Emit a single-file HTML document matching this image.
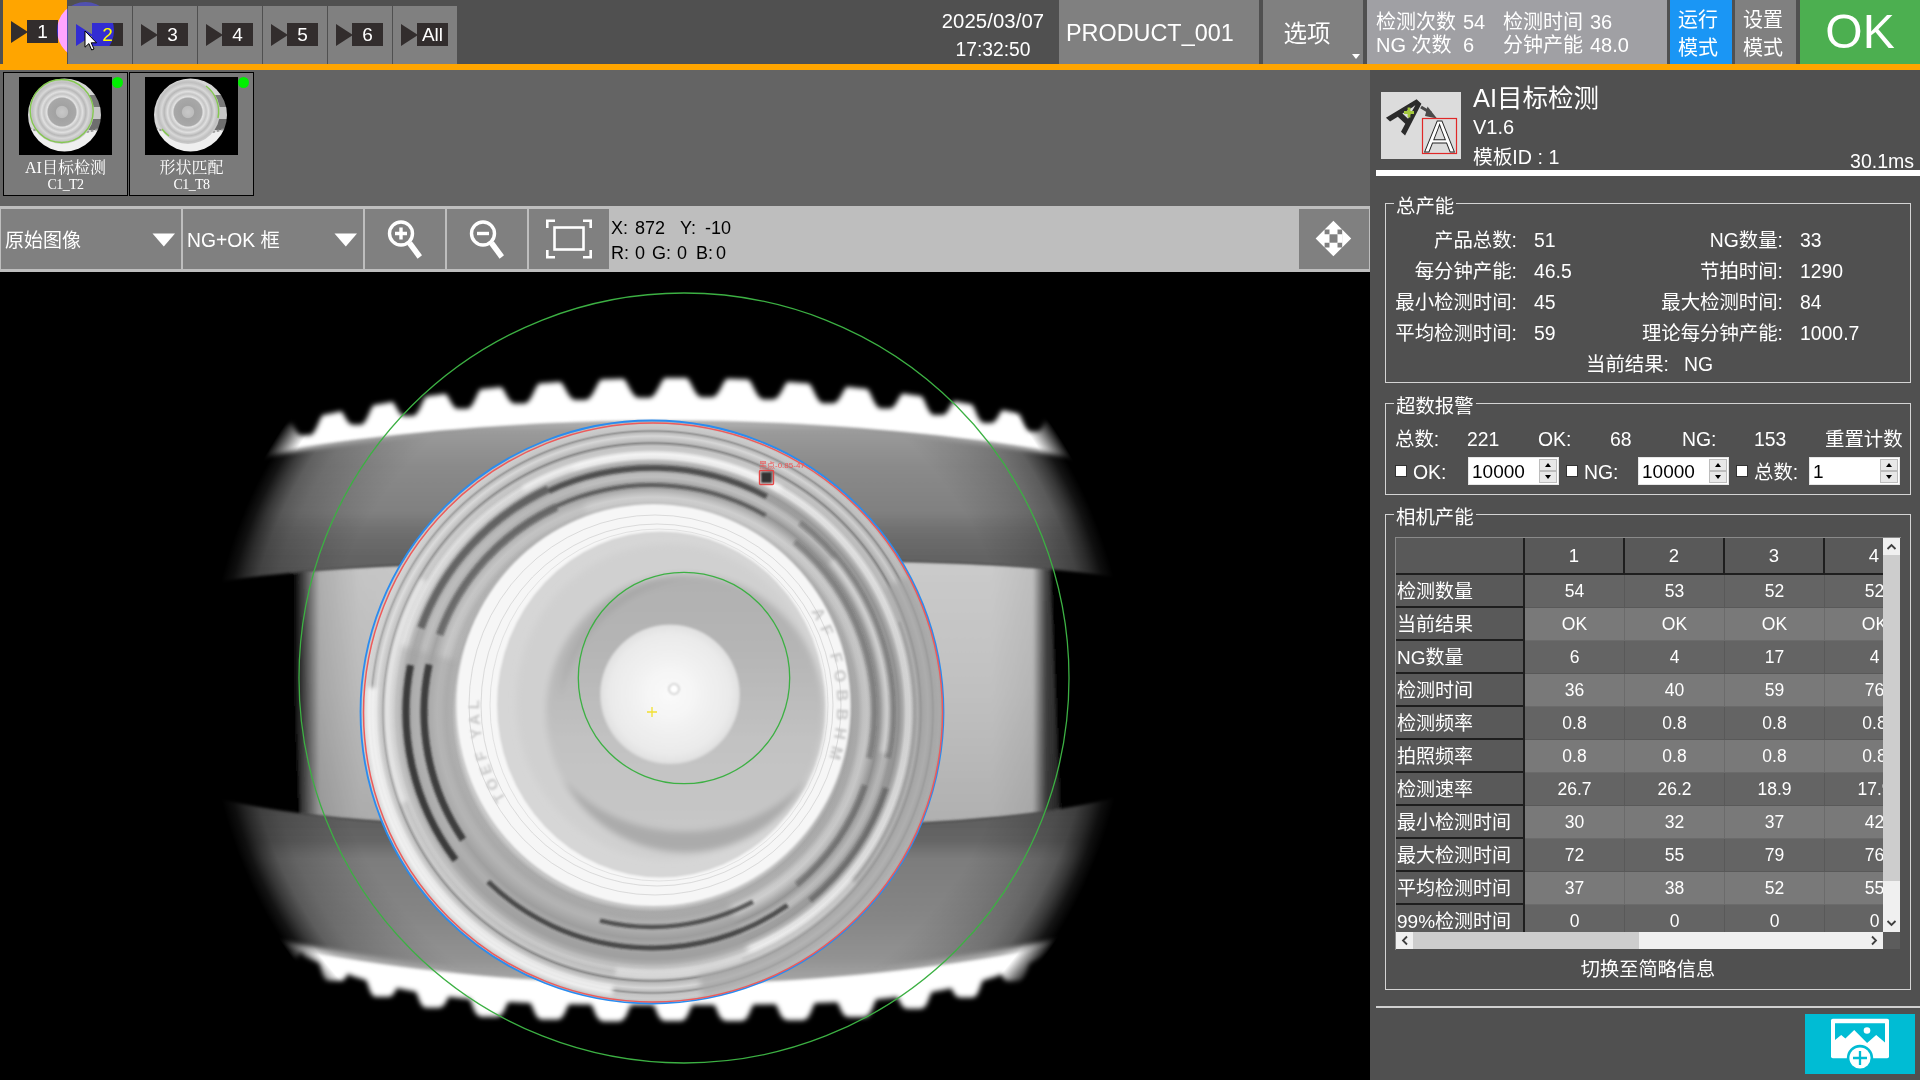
<!DOCTYPE html>
<html lang="zh-CN">
<head>
<meta charset="utf-8">
<title>AI目标检测</title>
<style>
*{box-sizing:border-box;margin:0;padding:0}
html,body{width:1920px;height:1080px;overflow:hidden;background:#505050}
body{position:relative;font-family:"Liberation Sans","Noto Sans CJK SC",sans-serif;color:#fff;font-size:19px}
.abs{position:absolute}
.t{position:absolute;white-space:nowrap;line-height:1}
/* ---------- top bar ---------- */
#topbar{position:absolute;left:0;top:0;width:1920px;height:64px;background:#505050}
#oline{position:absolute;left:0;top:64px;width:1920px;height:6px;background:#ffa500}
.tab{position:absolute;top:6px;height:58px;width:64px;background:#808080}
.tab.sel{top:0;height:64px;background:#ffa500}
.cam{position:absolute;left:8px;top:17px;width:48px;height:24px}
.tab.sel .cam{top:20px}
.cam i{position:absolute;left:0;top:1px;width:0;height:0;border-left:17px solid #322d2d;border-top:11px solid transparent;border-bottom:11px solid transparent}
.cam b{position:absolute;left:16px;top:0;width:31px;height:23px;background:#322d2d;color:#fff;font-weight:normal;font-size:19px;line-height:24px;text-align:center}
.box{position:absolute;top:0;height:64px}
/* ---------- left panel ---------- */
#left{position:absolute;left:0;top:70px;width:1370px;height:1010px;background:#646464}
.thumb{position:absolute;top:2px;width:125px;height:124px;background:#7a7a7a;border:1px solid #000}
.thumb svg{position:absolute;left:15px;top:4px}
.thumb .dot{position:absolute;left:108px;top:4px;width:11px;height:11px;border-radius:50%;background:#00f000}
.thumb .n1{position:absolute;left:0;width:123px;top:86px;text-align:center;font-family:"Liberation Serif","Noto Serif CJK SC",serif;font-size:16px;line-height:18px}
.thumb .n2{position:absolute;left:0;width:123px;top:105px;text-align:center;font-family:"Liberation Serif","Noto Serif CJK SC",serif;font-size:14px;letter-spacing:-0.6px;line-height:14px}
#toolbar{position:absolute;left:0;top:136px;width:1370px;height:66px;background:#bebebe}
.tb{position:absolute;top:3px;height:60px;background:#808080}
#view{position:absolute;left:0;top:202px;width:1370px;height:808px;background:#000;overflow:hidden}
/* ---------- right panel ---------- */
#right{position:absolute;left:1370px;top:70px;width:550px;height:1010px;background:#505050}
.grp{position:absolute;border:1px solid #d4d4d4}
.leg{position:absolute;background:#505050;padding:0 2px;line-height:20px;font-size:19.4px;white-space:nowrap;margin-top:1.5px}
.lab{position:absolute;text-align:right;white-space:nowrap;line-height:22px;height:22px;font-size:19.4px}
.val{position:absolute;white-space:nowrap;line-height:22px;height:22px;font-size:19.4px}
.chk{position:absolute;width:12px;height:12px;background:#fff;border:1px solid #333}
.spin{position:absolute;height:28px;width:91px;background:#fff;border:1px solid #e6e6e6;color:#000;font-size:19px;line-height:27px;padding-left:3px}
.spin u{position:absolute;right:1px;width:18px;height:12px;background:#e8e8e8;border:1px solid #bdbdbd;text-decoration:none}
.spin u:before{content:"";position:absolute;left:5px;top:3px;border-left:3.5px solid transparent;border-right:3.5px solid transparent}
.spin u.up{top:1px}.spin u.up:before{border-bottom:4px solid #000}
.spin u.dn{top:13px}.spin u.dn:before{border-top:4px solid #000}
</style>
</head>
<body>
<div id="topbar">
  <div class="tab sel" style="left:3px"><div class="cam"><i></i><b>1</b></div></div>
  <div class="tab" style="left:68px"><div class="cam"><i></i><b>2</b></div></div>
  <div class="tab" style="left:133px"><div class="cam"><i></i><b>3</b></div></div>
  <div class="tab" style="left:198px"><div class="cam"><i></i><b>4</b></div></div>
  <div class="tab" style="left:263px"><div class="cam"><i></i><b>5</b></div></div>
  <div class="tab" style="left:328px"><div class="cam"><i></i><b>6</b></div></div>
  <div class="tab" style="left:393px"><div class="cam"><i></i><b>All</b></div></div>
  <div class="t" style="left:893px;width:200px;top:11px;text-align:center;font-size:20.3px;letter-spacing:0.1px">2025/03/07</div>
  <div class="t" style="left:893px;width:200px;top:40px;text-align:center;font-size:19.3px">17:32:50</div>
  <div class="box" style="left:1059px;width:200px;background:#808080"><div class="t" style="left:7px;top:21.5px;font-size:23.4px">PRODUCT_001</div></div>
  <div class="box" style="left:1263px;width:100px;background:#808080"><div class="t" style="left:0;width:88px;top:23px;text-align:center;font-size:23.5px">选项</div>
    <div class="abs" style="left:89px;top:54px;width:0;height:0;border-left:4.5px solid transparent;border-right:4.5px solid transparent;border-top:5px solid #fff"></div></div>
  <div class="box" style="left:1367px;width:300px;background:#a0a0a4;font-size:20px">
    <div class="t" style="left:9px;top:12px">检测次数</div><div class="t" style="left:96px;top:12px">54</div>
    <div class="t" style="left:9px;top:35px">NG 次数</div><div class="t" style="left:96px;top:35px">6</div>
    <div class="t" style="left:136px;top:12px">检测时间</div><div class="t" style="left:223px;top:12px">36</div>
    <div class="t" style="left:136px;top:35px">分钟产能</div><div class="t" style="left:223px;top:35px">48.0</div>
  </div>
  <div class="box" style="left:1670px;width:62px;background:#1a96f5;font-size:20px"><div class="t" style="left:8px;top:10px">运行</div><div class="t" style="left:8px;top:38px">模式</div></div>
  <div class="box" style="left:1735px;width:61px;background:#808080;font-size:20px"><div class="t" style="left:8px;top:10px">设置</div><div class="t" style="left:8px;top:38px">模式</div></div>
  <div class="box" style="left:1800px;width:120px;background:#4caf50"><div class="t" style="left:0;width:120px;top:8px;text-align:center;font-size:48px">OK</div></div>
</div>
<div id="oline"></div>

<div id="left">
  <div class="thumb" style="left:3px"><svg width="93" height="78" viewBox="0 0 93 78"><defs><radialGradient id="tg1" gradientUnits="userSpaceOnUse" cx="43" cy="35" r="33"><stop offset="0" stop-color="#c8c8c8"/><stop offset="0.17" stop-color="#bdbdbd"/><stop offset="0.2" stop-color="#a2a2a2"/><stop offset="0.42" stop-color="#a8a8a8"/><stop offset="0.46" stop-color="#e4e4e4"/><stop offset="0.55" stop-color="#c4c4c4"/><stop offset="0.62" stop-color="#e0e0e0"/><stop offset="0.72" stop-color="#b8b8b8"/><stop offset="0.8" stop-color="#d8d8d8"/><stop offset="0.9" stop-color="#c0c0c0"/><stop offset="1" stop-color="#d0d0d0"/></radialGradient><clipPath id="tc1"><circle cx="45.5" cy="38" r="36.5"/></clipPath><filter id="tb1"><feGaussianBlur stdDeviation="0.7"/></filter></defs><rect width="93" height="78" fill="#000"/><g clip-path="url(#tc1)" filter="url(#tb1)"><rect x="0" y="0" width="93" height="78" fill="#d6d6d6"/><rect x="60" y="18" width="33" height="12" fill="#7a7a7a"/><rect x="60" y="42" width="33" height="11" fill="#6e6e6e"/><rect x="60" y="30" width="33" height="12" fill="#c8c8c8"/><path d="M6 50Q45 66 86 50L86 80L6 80Z" fill="#efefef"/><path d="M10 51Q45 64 82 51" stroke="#9a9a9a" stroke-width="2" stroke-dasharray="2.500 2" fill="none"/><circle cx="43" cy="35" r="32" fill="url(#tg1)"/></g><circle cx="42.7" cy="34" r="31.5" fill="none" stroke="#84c850" stroke-width="1.4"/></svg><div class="dot"></div><div class="n1">AI目标检测</div><div class="n2">C1_T2</div></div>
  <div class="thumb" style="left:129px"><svg width="93" height="78" viewBox="0 0 93 78"><defs><radialGradient id="tg2" gradientUnits="userSpaceOnUse" cx="43" cy="35" r="33"><stop offset="0" stop-color="#c8c8c8"/><stop offset="0.17" stop-color="#bdbdbd"/><stop offset="0.2" stop-color="#a2a2a2"/><stop offset="0.42" stop-color="#a8a8a8"/><stop offset="0.46" stop-color="#e4e4e4"/><stop offset="0.55" stop-color="#c4c4c4"/><stop offset="0.62" stop-color="#e0e0e0"/><stop offset="0.72" stop-color="#b8b8b8"/><stop offset="0.8" stop-color="#d8d8d8"/><stop offset="0.9" stop-color="#c0c0c0"/><stop offset="1" stop-color="#d0d0d0"/></radialGradient><clipPath id="tc2"><circle cx="45.5" cy="38" r="36.5"/></clipPath><filter id="tb2"><feGaussianBlur stdDeviation="0.7"/></filter></defs><rect width="93" height="78" fill="#000"/><g clip-path="url(#tc2)" filter="url(#tb2)"><rect x="0" y="0" width="93" height="78" fill="#d6d6d6"/><rect x="60" y="18" width="33" height="12" fill="#7a7a7a"/><rect x="60" y="42" width="33" height="11" fill="#6e6e6e"/><rect x="60" y="30" width="33" height="12" fill="#c8c8c8"/><path d="M6 50Q45 66 86 50L86 80L6 80Z" fill="#efefef"/><path d="M10 51Q45 64 82 51" stroke="#9a9a9a" stroke-width="2" stroke-dasharray="2.500 2" fill="none"/><circle cx="43" cy="35" r="32" fill="url(#tg2)"/></g><path d="M61 9A32 32 0 0 1 73 41" fill="none" stroke="#84c850" stroke-width="1.4"/><path d="M17 52A32 32 0 0 0 24 59" fill="none" stroke="#84c850" stroke-width="1.4"/></svg><div class="dot"></div><div class="n1">形状匹配</div><div class="n2">C1_T8</div></div>
  <div id="toolbar">
    <div class="tb" style="left:1px;width:180px"><div class="t" style="left:4px;top:22px;font-size:19px">原始图像</div>
      <svg class="abs" style="left:151px;top:24px" width="24" height="14"><path d="M0.5 0.5H23L11.8 13.5Z" fill="#fff"/></svg></div>
    <div class="tb" style="left:183px;width:180px"><div class="t" style="left:4px;top:22px;font-size:19.3px">NG+OK 框</div>
      <svg class="abs" style="left:151px;top:24px" width="24" height="14"><path d="M0.5 0.5H23L11.8 13.5Z" fill="#fff"/></svg></div>
    <div class="tb" style="left:365px;width:80px"><svg class="abs" style="left:0;top:0" width="80" height="60" fill="none" stroke="#fff">
      <circle cx="36" cy="24.5" r="11.5" stroke-width="3.4"/><path d="M44.500 34L54.800 48" stroke-width="5.5"/><path d="M30 24.5H42M36 18.5V30.5" stroke-width="3.4"/></svg></div>
    <div class="tb" style="left:447px;width:80px"><svg class="abs" style="left:0;top:0" width="80" height="60" fill="none" stroke="#fff">
      <circle cx="36" cy="24.5" r="11.5" stroke-width="3.4"/><path d="M44.500 34L54.800 48" stroke-width="5.5"/><path d="M30 24.5H42" stroke-width="3.4"/></svg></div>
    <div class="tb" style="left:529px;width:80px"><svg class="abs" style="left:0;top:0" width="80" height="60" fill="none" stroke="#fff" stroke-width="2.6">
      <rect x="25.5" y="18.5" width="29" height="22"/><path d="M18.3 19V11.7H26M54 11.7H61.700V19M61.7 41V48.3H54M26 48.3H18.3V41"/></svg></div>
    <div class="t" style="left:611px;top:13px;font-size:18px;color:#000">X:</div><div class="t" style="left:635px;top:13px;font-size:18px;color:#000">872</div><div class="t" style="left:680px;top:13px;font-size:18px;color:#000">Y:</div><div class="t" style="left:705px;top:13px;font-size:18px;color:#000">-10</div>
    <div class="t" style="left:611px;top:38px;font-size:18px;color:#000">R:</div><div class="t" style="left:635px;top:38px;font-size:18px;color:#000">0</div><div class="t" style="left:652px;top:38px;font-size:18px;color:#000">G:</div><div class="t" style="left:677px;top:38px;font-size:18px;color:#000">0</div><div class="t" style="left:696px;top:38px;font-size:18px;color:#000">B:</div><div class="t" style="left:716px;top:38px;font-size:18px;color:#000">0</div>
    <div class="tb" style="left:1299px;width:70px"><svg class="abs" style="left:0;top:0" width="70" height="60"><path fill="#fff" d="M34.400 11.700L43.200 20.500H25.600ZM34.400 47.300L43.200 38.500H25.600ZM16.600 29.500L25.600 20.500V38.500ZM52.200 29.500L43.200 20.500V38.500ZM30.500 20.400H38.500V38.600H30.500ZM25.500 25.300H43.300V33.700H25.500Z"/><rect x="30.500" y="25.300" width="8" height="8.400" fill="#808080"/></svg></div>
  </div>
  <div id="view"><svg width="1370" height="808" viewBox="0 272 1370 808" style="position:absolute;left:0;top:0">
<defs>
<radialGradient id="vg" gradientUnits="userSpaceOnUse" cx="668" cy="690" r="480.0"><stop offset="0.7188" stop-color="#ffffff"/><stop offset="0.7875" stop-color="#e6e6e6"/><stop offset="0.8500" stop-color="#cccccc"/><stop offset="0.8854" stop-color="#adadad"/><stop offset="0.9125" stop-color="#6b6b6b"/><stop offset="0.9354" stop-color="#262626"/><stop offset="0.9583" stop-color="#000000"/></radialGradient>
<radialGradient id="vgw" gradientUnits="userSpaceOnUse" cx="668" cy="686" r="480.0"><stop offset="0.9167" stop-color="#ffffff"/><stop offset="0.9417" stop-color="#808080"/><stop offset="0.9667" stop-color="#000000"/></radialGradient>
<mask id="vm" maskUnits="userSpaceOnUse" x="0" y="272" width="1370" height="808"><rect x="0" y="272" width="1370" height="808" fill="url(#vg)"/></mask>
<mask id="vmw" maskUnits="userSpaceOnUse" x="0" y="272" width="1370" height="808"><rect x="0" y="272" width="1370" height="808" fill="url(#vgw)"/></mask>
<filter id="b1" filterUnits="userSpaceOnUse" x="0" y="272" width="1370" height="808"><feGaussianBlur stdDeviation="1.6"/></filter>
<filter id="b2s" filterUnits="userSpaceOnUse" x="0" y="272" width="1370" height="808"><feGaussianBlur stdDeviation="2.7"/></filter><filter id="b2h" filterUnits="userSpaceOnUse" x="0" y="272" width="1370" height="808"><feGaussianBlur stdDeviation="2"/></filter><filter id="b2" filterUnits="userSpaceOnUse" x="0" y="272" width="1370" height="808"><feGaussianBlur stdDeviation="3"/></filter>
<filter id="b3" filterUnits="userSpaceOnUse" x="0" y="272" width="1370" height="808"><feGaussianBlur stdDeviation="6"/></filter>
<filter id="b05" filterUnits="userSpaceOnUse" x="0" y="272" width="1370" height="808"><feGaussianBlur stdDeviation="0.8"/></filter>
<linearGradient id="ub" gradientUnits="userSpaceOnUse" x1="0" y1="421" x2="0" y2="572"><stop offset="0" stop-color="#b4b4b4"/><stop offset="0.07" stop-color="#9a9a9a"/><stop offset="0.3" stop-color="#8a8a8a"/><stop offset="0.6" stop-color="#808080"/><stop offset="0.72" stop-color="#707070"/><stop offset="0.85" stop-color="#666"/><stop offset="1" stop-color="#606060"/></linearGradient>
<linearGradient id="lb" gradientUnits="userSpaceOnUse" x1="0" y1="812" x2="0" y2="985"><stop offset="0" stop-color="#5c5c5c"/><stop offset="0.17" stop-color="#666"/><stop offset="0.27" stop-color="#7c7c7c"/><stop offset="0.6" stop-color="#858585"/><stop offset="0.85" stop-color="#929292"/><stop offset="1" stop-color="#a8a8a8"/></linearGradient>
<linearGradient id="mb" gradientUnits="userSpaceOnUse" x1="0" y1="565" x2="0" y2="820"><stop offset="0" stop-color="#cacaca"/><stop offset="0.5" stop-color="#c0c0c0"/><stop offset="1" stop-color="#b0b0b0"/></linearGradient>
<linearGradient id="mbs" gradientUnits="userSpaceOnUse" x1="280" y1="0" x2="1070" y2="0"><stop offset="0" stop-color="#000" stop-opacity="1"/><stop offset="0.018" stop-color="#000" stop-opacity="0.97"/><stop offset="0.05" stop-color="#000" stop-opacity="0.14"/><stop offset="0.1" stop-color="#000" stop-opacity="0.03"/><stop offset="0.2" stop-color="#000" stop-opacity="0"/><stop offset="0.9" stop-color="#000" stop-opacity="0"/><stop offset="0.953" stop-color="#000" stop-opacity="0.06"/><stop offset="0.97" stop-color="#000" stop-opacity="0.68"/><stop offset="0.985" stop-color="#000" stop-opacity="0.8"/><stop offset="1" stop-color="#000" stop-opacity="0.9"/></linearGradient>
<radialGradient id="capg" gradientUnits="userSpaceOnUse" cx="652" cy="712" r="291"><stop offset="0.0000" stop-color="#d2d2d2"/><stop offset="0.5155" stop-color="#d2d2d2"/><stop offset="0.6735" stop-color="#c4c4c4"/><stop offset="0.6873" stop-color="#aaaaaa"/><stop offset="0.7079" stop-color="#b0b0b0"/><stop offset="0.7251" stop-color="#c8c8c8"/><stop offset="0.7388" stop-color="#cecece"/><stop offset="0.7526" stop-color="#bebebe"/><stop offset="0.7663" stop-color="#aaaaaa"/><stop offset="0.7801" stop-color="#969696"/><stop offset="0.7938" stop-color="#acacac"/><stop offset="0.8076" stop-color="#bebebe"/><stop offset="0.8179" stop-color="#bababa"/><stop offset="0.8316" stop-color="#a0a0a0"/><stop offset="0.8488" stop-color="#9c9c9c"/><stop offset="0.8625" stop-color="#bababa"/><stop offset="0.8729" stop-color="#e2e2e2"/><stop offset="0.8866" stop-color="#e8e8e8"/><stop offset="0.9003" stop-color="#c4c4c4"/><stop offset="0.9141" stop-color="#c4c4c4"/><stop offset="0.9244" stop-color="#8c8c8c"/><stop offset="0.9313" stop-color="#bababa"/><stop offset="0.9485" stop-color="#d6d6d6"/><stop offset="0.9588" stop-color="#bebebe"/><stop offset="0.9656" stop-color="#969696"/><stop offset="0.9725" stop-color="#c4c4c4"/><stop offset="0.9863" stop-color="#cccccc"/><stop offset="0.9966" stop-color="#bcbcbc"/><stop offset="1.0034" stop-color="#aaaaaa"/></radialGradient>
<linearGradient id="caplr" gradientUnits="userSpaceOnUse" x1="361" y1="0" x2="943" y2="0"><stop offset="0" stop-color="#fff" stop-opacity="0.2"/><stop offset="0.3" stop-color="#fff" stop-opacity="0"/><stop offset="0.7" stop-color="#000" stop-opacity="0"/><stop offset="0.9" stop-color="#000" stop-opacity="0.05"/><stop offset="1" stop-color="#000" stop-opacity="0.14"/></linearGradient>
<radialGradient id="ctr" gradientUnits="userSpaceOnUse" cx="670" cy="694" r="72"><stop offset="0.0000" stop-color="#fafafa"/><stop offset="0.2778" stop-color="#f6f6f6"/><stop offset="0.5556" stop-color="#f0f0f0"/><stop offset="0.8333" stop-color="#eaeaea"/><stop offset="0.9444" stop-color="#e2e2e2"/><stop offset="1.0000" stop-color="#c8c8c8"/></radialGradient>
<linearGradient id="bdisk" gradientUnits="userSpaceOnUse" x1="0" y1="574" x2="0" y2="852"><stop offset="0" stop-color="#b0b0b0"/><stop offset="0.3" stop-color="#b6b6b6"/><stop offset="0.6" stop-color="#c2c2c2"/><stop offset="1" stop-color="#c8c8c8"/></linearGradient>
<clipPath id="capclip"><circle cx="652" cy="712" r="291"/></clipPath>
</defs>
<rect x="0" y="272" width="1370" height="808" fill="#000"/>
<g mask="url(#vmw)">
<g filter="url(#b1)"><path d="M290 572.0 L290 572.0 L310 570.2 L330 568.7 L350 567.3 L370 566.2 L390 565.2 L410 564.3 L430 563.6 L450 563.0 L470 562.4 L490 562.0 L510 561.6 L530 561.3 L550 561.0 L570 560.8 L590 560.6 L610 560.4 L630 560.2 L650 560.1 L670 560.0 L690 559.9 L710 559.8 L730 559.7 L750 559.7 L770 559.6 L790 559.6 L810 559.7 L830 559.8 L850 560.0 L870 560.2 L890 560.6 L910 561.0 L930 561.5 L950 562.2 L970 563.1 L990 564.1 L1010 565.3 L1030 566.7 L1050 568.3 L1060 809.9 L1040 812.9 L1020 815.5 L1000 817.7 L980 819.6 L960 821.2 L940 822.6 L920 823.7 L900 824.7 L880 825.4 L860 826.1 L840 826.6 L820 827.0 L800 827.3 L780 827.5 L760 827.7 L740 827.8 L720 827.9 L700 828.0 L680 828.0 L660 828.0 L640 828.0 L620 827.9 L600 827.9 L580 827.8 L560 827.6 L540 827.4 L520 827.1 L500 826.8 L480 826.3 L460 825.8 L440 825.1 L420 824.2 L400 823.2 L380 821.9 L360 820.4 L340 818.7 L320 816.6 L300 814.2 Z" fill="url(#mb)"/><path d="M282 572.8 L282 572.8 L302 570.9 L322 569.3 L342 567.8 L362 566.6 L382 565.5 L402 564.6 L422 563.9 L442 563.2 L462 562.6 L482 562.2 L502 561.8 L522 561.4 L542 561.1 L562 560.9 L582 560.7 L602 560.5 L622 560.3 L642 560.1 L662 560.0 L682 559.9 L702 559.8 L722 559.7 L742 559.7 L762 559.6 L782 559.6 L802 559.7 L822 559.8 L842 559.9 L862 560.1 L882 560.4 L902 560.8 L922 561.3 L942 561.9 L962 562.7 L982 563.6 L1002 564.8 L1022 566.1 L1042 567.7 L1062 569.5 L1068 808.6 L1048 811.8 L1028 814.5 L1008 816.9 L988 818.9 L968 820.6 L948 822.1 L928 823.3 L908 824.3 L888 825.1 L868 825.8 L848 826.4 L828 826.8 L808 827.2 L788 827.4 L768 827.6 L748 827.8 L728 827.9 L708 827.9 L688 828.0 L668 828.0 L648 828.0 L628 828.0 L608 827.9 L588 827.8 L568 827.7 L548 827.5 L528 827.2 L508 826.9 L488 826.5 L468 826.0 L448 825.4 L428 824.6 L408 823.6 L388 822.5 L368 821.1 L348 819.4 L328 817.5 L308 815.2 L288 812.6 Z" fill="url(#mbs)"/></g>
<g filter="url(#b2s)"><path d="M240 460.1 L240 434.8 L288.4 422.8 C292.0 419.0 295.3 435.2 301.4 435.2 L309.6 435.2 C315.7 435.2 319.0 419.0 322.6 415.3 L339.4 411.8 C343.0 408.4 346.3 424.7 352.4 424.7 L360.6 424.7 C366.7 424.7 370.0 408.4 373.6 405.3 L390.7 402.2 C394.5 399.3 397.9 416.1 404.3 416.1 L412.7 416.1 C419.1 416.1 422.5 399.3 426.3 396.6 L444.1 394.0 C447.9 391.5 451.5 408.8 458.1 408.8 L466.9 408.8 C473.5 408.8 477.1 391.5 480.9 389.3 L499.7 387.2 C503.9 385.3 507.7 403.5 514.8 403.5 L524.2 403.5 C531.3 403.5 535.1 385.3 539.3 383.5 L559.4 382.0 C563.8 380.7 567.9 399.9 575.5 399.9 L585.5 399.9 C593.1 399.9 597.2 380.7 601.6 379.6 L622.6 378.8 C627.0 378.3 631.2 397.8 638.9 397.8 L649.1 397.8 C656.8 397.8 661.0 378.3 665.4 378.0 L686.2 378.0 C690.6 378.3 694.6 397.3 702.0 397.3 L712.0 397.3 C719.4 397.3 723.4 378.3 727.8 378.8 L748.1 379.6 C752.3 380.6 756.3 399.4 763.6 399.4 L773.4 399.4 C780.7 399.4 784.7 380.6 788.9 381.9 L808.7 383.4 C812.9 385.1 816.7 403.3 823.8 403.3 L833.2 403.3 C840.3 403.3 844.1 385.1 848.3 387.0 L867.1 389.1 C870.9 391.3 874.5 408.5 881.1 408.5 L889.9 408.5 C896.5 408.5 900.1 391.3 903.9 393.7 L921.4 396.2 C925.0 398.8 928.3 415.1 934.4 415.1 L942.6 415.1 C948.7 415.1 952.0 398.8 955.6 401.6 L971.9 404.4 C975.3 407.4 978.4 422.9 984.2 422.9 L991.8 422.9 C997.6 422.9 1000.7 407.4 1004.1 410.5 L1019.3 413.6 C1022.3 416.7 1025.2 431.2 1030.5 431.2 L1037.5 431.2 C1042.8 431.2 1045.7 416.7 1048.7 419.9 L1100 432.2 L1100 461.8 L1100 461.8 L1080 458.4 L1060 455.2 L1040 452.1 L1020 449.2 L1000 446.4 L980 443.8 L960 441.4 L940 439.1 L920 437.0 L900 435.0 L880 433.2 L860 431.6 L840 430.1 L820 428.8 L800 427.6 L780 426.6 L760 425.8 L740 425.1 L720 424.6 L700 424.2 L680 424.0 L660 424.0 L640 424.1 L620 424.4 L600 424.8 L580 425.4 L560 426.2 L540 427.1 L520 428.2 L500 429.4 L480 430.8 L460 432.4 L440 434.1 L420 436.0 L400 438.0 L380 440.2 L360 442.6 L340 445.1 L320 447.8 L300 450.6 L280 453.6 L260 456.8 L240 460.1 Z" fill="#fff"/><path d="M240 932.8 L240 932.8 L260 937.0 L280 940.9 L300 944.7 L320 948.2 L340 951.6 L360 954.7 L380 957.7 L400 960.4 L420 963.0 L440 965.3 L460 967.5 L480 969.4 L500 971.2 L520 972.7 L540 974.1 L560 975.2 L580 976.2 L600 976.9 L620 977.5 L640 977.8 L660 978.0 L680 977.9 L700 977.7 L720 977.2 L740 976.6 L760 975.7 L780 974.7 L800 973.4 L820 972.0 L840 970.3 L860 968.5 L880 966.4 L900 964.2 L920 961.7 L940 959.1 L960 956.2 L980 953.2 L1000 949.9 L1020 946.5 L1040 942.8 L1060 939.0 L1080 934.9 L1100 930.7 L1100 924.2 L1076.4 939.8 C1073.7 948.7 1073.0 959.9 1066.5 959.9 L1055.5 959.9 C1049.0 959.9 1048.3 948.7 1045.6 956.6 L1030.2 963.7 C1027.4 970.0 1026.7 981.5 1020.1 981.5 L1008.9 981.5 C1002.3 981.5 1001.6 970.0 998.8 975.6 L982.8 980.5 C979.8 985.0 979.0 997.5 972.0 997.5 L960.0 997.5 C953.0 997.5 952.2 985.0 949.2 988.8 L932.1 992.1 C928.9 995.0 928.0 1008.8 920.5 1008.8 L907.5 1008.8 C900.0 1008.8 899.1 995.0 895.9 997.3 L876.9 999.3 C873.3 1001.0 872.4 1017.1 863.8 1017.1 L849.2 1017.1 C840.6 1017.1 839.7 1001.0 836.1 1002.2 L815.8 1003.1 C812.1 1003.8 811.2 1020.2 802.6 1020.2 L787.8 1020.2 C779.2 1020.2 778.3 1003.8 774.6 1004.3 L754.3 1004.6 C750.7 1004.8 749.8 1021.0 741.2 1021.0 L726.6 1021.0 C718.0 1021.0 717.1 1004.8 713.5 1004.9 L693.4 1005.0 C689.7 1005.0 688.8 1021.1 680.3 1021.1 L665.6 1021.1 C657.1 1021.1 656.2 1005.0 652.5 1005.0 L632.2 1004.9 C628.4 1004.8 627.5 1021.4 618.8 1021.4 L603.8 1021.4 C595.0 1021.4 594.1 1004.8 590.3 1004.5 L570.0 1004.2 C566.4 1003.7 565.5 1019.6 557.0 1019.6 L542.6 1019.6 C534.1 1019.6 533.2 1003.7 529.6 1003.0 L509.6 1002.0 C506.0 1000.7 505.1 1016.7 496.6 1016.7 L482.0 1016.7 C473.5 1016.7 472.6 1000.7 469.0 998.9 L450.4 996.9 C447.3 994.5 446.5 1007.7 439.2 1007.7 L426.8 1007.7 C419.5 1007.7 418.7 994.5 415.6 991.7 L398.9 988.4 C396.0 984.6 395.2 996.8 388.4 996.8 L376.6 996.8 C369.8 996.8 369.0 984.6 366.1 980.2 L350.2 975.3 C347.4 969.6 346.7 981.1 340.1 981.1 L328.9 981.1 C322.3 981.1 321.6 969.6 318.8 963.2 L302.9 955.9 C300.0 947.3 299.2 959.5 292.4 959.5 L280.6 959.5 C273.8 959.5 273.0 947.3 270.1 937.7 L240 916.8 Z" fill="#fff"/></g>
</g>
<g mask="url(#vm)">
<g filter="url(#b1)"><path d="M200 464.2 L200 464.2 L220 460.6 L240 457.1 L260 453.8 L280 450.6 L300 447.6 L320 444.8 L340 442.1 L360 439.6 L380 437.2 L400 435.0 L420 433.0 L440 431.1 L460 429.4 L480 427.8 L500 426.4 L520 425.2 L540 424.1 L560 423.2 L580 422.4 L600 421.8 L620 421.4 L640 421.1 L660 421.0 L680 421.0 L700 421.2 L720 421.6 L740 422.1 L760 422.8 L780 423.6 L800 424.6 L820 425.8 L840 427.1 L860 428.6 L880 430.2 L900 432.0 L920 434.0 L940 436.1 L960 438.4 L980 440.8 L1000 443.4 L1020 446.2 L1040 449.1 L1060 452.2 L1080 455.4 L1100 458.8 L1120 462.4 L1140 466.1 L1140 580.5 L1120 577.4 L1100 574.7 L1080 572.3 L1060 570.3 L1040 568.5 L1020 566.9 L1000 565.6 L980 564.5 L960 563.6 L940 562.9 L920 562.3 L900 561.8 L880 561.4 L860 561.1 L840 560.9 L820 560.8 L800 560.7 L780 560.6 L760 560.6 L740 560.7 L720 560.7 L700 560.8 L680 560.9 L660 561.0 L640 561.2 L620 561.3 L600 561.5 L580 561.7 L560 561.9 L540 562.1 L520 562.4 L500 562.8 L480 563.2 L460 563.7 L440 564.3 L420 564.9 L400 565.7 L380 566.6 L360 567.7 L340 569.0 L320 570.4 L300 572.1 L280 574.0 L260 576.1 L240 578.6 L220 581.4 L200 584.5 Z" fill="url(#ub)"/>
<path d="M200 794.8 L200 794.8 L220 799.5 L240 803.6 L260 807.3 L280 810.5 L300 813.2 L320 815.6 L340 817.7 L360 819.4 L380 820.9 L400 822.2 L420 823.2 L440 824.1 L460 824.8 L480 825.3 L500 825.8 L520 826.1 L540 826.4 L560 826.6 L580 826.8 L600 826.9 L620 826.9 L640 827.0 L660 827.0 L680 827.0 L700 827.0 L720 826.9 L740 826.8 L760 826.7 L780 826.5 L800 826.3 L820 826.0 L840 825.6 L860 825.1 L880 824.4 L900 823.7 L920 822.7 L940 821.6 L960 820.2 L980 818.6 L1000 816.7 L1020 814.5 L1040 811.9 L1060 808.9 L1080 805.5 L1100 801.6 L1120 797.2 L1140 792.2 L1140 927.6 L1120 932.2 L1100 936.7 L1080 940.9 L1060 945.0 L1040 948.8 L1020 952.5 L1000 955.9 L980 959.2 L960 962.2 L940 965.1 L920 967.7 L900 970.2 L880 972.4 L860 974.5 L840 976.3 L820 978.0 L800 979.4 L780 980.7 L760 981.7 L740 982.6 L720 983.2 L700 983.7 L680 983.9 L660 984.0 L640 983.8 L620 983.5 L600 982.9 L580 982.2 L560 981.2 L540 980.1 L520 978.7 L500 977.2 L480 975.4 L460 973.5 L440 971.3 L420 969.0 L400 966.4 L380 963.7 L360 960.7 L340 957.6 L320 954.2 L300 950.7 L280 946.9 L260 943.0 L240 938.8 L220 934.5 L200 929.9 Z" fill="url(#lb)"/></g>
</g>
<g clip-path="url(#capclip)">
<circle cx="652" cy="712" r="292" fill="url(#capg)"/>
<circle cx="652" cy="712" r="292" fill="url(#caplr)"/>
<path d="M428.9 652.2 A231 231 0 0 0 738.5 926.2" fill="none" stroke="#a2a2a2" stroke-width="58" stroke-opacity="0.62" filter="url(#b2)"/>
<path d="M580.6 492.3 A231 231 0 0 0 428.9 652.2" fill="none" stroke="#a8a8a8" stroke-width="56" stroke-opacity="0.3" filter="url(#b2)"/>
<path d="M896.6 582.0 A277 277 0 0 1 700.1 984.8" fill="none" stroke="#a6a6a6" stroke-width="25" stroke-opacity="0.72" filter="url(#b2)"/>
<path d="M899.1 622.0 A263 263 0 0 1 742.0 959.1" fill="none" stroke="#8a8a8a" stroke-width="1.6" stroke-opacity="0.7" filter="url(#b05)"/>
<g fill="none" stroke="#202020" filter="url(#b05)">
<path d="M766.6 496.6 A244 244 0 0 0 548.9 490.9" stroke-width="5.5" stroke-opacity="0.62"/>
<path d="M548.0 489.0 A246 246 0 0 0 420.8 627.9" stroke-width="7.5" stroke-opacity="0.5"/>
<path d="M410.5 665.1 A246 246 0 0 0 455.5 860.0" stroke-width="7" stroke-opacity="0.8"/>
<path d="M488.1 881.8 A236 236 0 0 0 787.4 905.3" stroke-width="5" stroke-opacity="0.72"/>
<path d="M810.1 900.4 A246 246 0 0 0 886.0 788.0" stroke-width="6" stroke-opacity="0.33"/>
<path d="M887.6 757.8 A240 240 0 0 0 799.8 522.9" stroke-width="6" stroke-opacity="0.28"/>
<path d="M765.5 515.4 A227 227 0 0 0 556.1 506.3" stroke-width="4" stroke-opacity="0.5"/>
<path d="M556.5 507.2 A226 226 0 0 0 439.6 634.7" stroke-width="7.5" stroke-opacity="0.45"/>
<path d="M429.0 664.6 A228 228 0 0 0 463.0 839.5" stroke-width="7" stroke-opacity="0.78"/>
<path d="M600.0 920.6 A215 215 0 0 0 752.9 901.8" stroke-width="4.5" stroke-opacity="0.66"/>
<path d="M796.6 884.4 A225 225 0 0 0 864.7 785.3" stroke-width="6" stroke-opacity="0.3"/>
<path d="M869.1 758.2 A222 222 0 0 0 794.7 541.9" stroke-width="6" stroke-opacity="0.28"/>
</g>
<g fill="none" stroke="#fff" filter="url(#b2h)">
<path d="M423.4 580.0 A264 264 0 0 0 403.9 802.3" stroke-width="7" stroke-opacity="0.5"/>
<path d="M372.1 687.5 A281 281 0 0 0 612.9 990.3" stroke-width="9" stroke-opacity="0.8"/>
<path d="M781.0 488.6 A258 258 0 0 0 523.0 488.6" stroke-width="6" stroke-opacity="0.5"/>
<path d="M615.5 971.5 A262 262 0 0 0 852.7 880.4" stroke-width="8" stroke-opacity="0.4"/>
<path d="M883.4 752.8 A235 235 0 0 0 832.0 560.9" stroke-width="8" stroke-opacity="0.35"/>
</g>
<g filter="url(#b05)">
<ellipse cx="653.5" cy="705" rx="197" ry="201" fill="#f6f6f6"/>
<ellipse cx="661" cy="704.5" rx="164" ry="173" fill="#d6d6d6"/>
</g>
<path id="tpl" d="M509.3 804.0 A177 177 0 0 1 489.7 644.5" fill="none"/><path id="tpr" d="M807.8 606.4 A181 181 0 0 1 812.8 795.5" fill="none"/>
<g font-family="Liberation Sans, sans-serif" font-weight="bold" fill="#a6a6a6" fill-opacity="0.6" filter="url(#b05)"><text font-size="15" letter-spacing="4.5"><textPath href="#tpl" startOffset="6">TOEF YAL</textPath></text><text font-size="16" letter-spacing="7"><textPath href="#tpr" startOffset="6">AF FOBBHM</textPath></text></g>
<g fill="none" stroke="#b8b8b8" stroke-width="1" stroke-opacity="0.45"><ellipse cx="655" cy="705" rx="186" ry="190"/><ellipse cx="657" cy="705" rx="176" ry="181"/><ellipse cx="659" cy="705" rx="169" ry="176" stroke="#c8c8c8"/></g>
<g filter="url(#b2)">
<ellipse cx="668" cy="702" rx="152" ry="158" fill="#d0d0d0"/>
<circle cx="685" cy="713" r="139" fill="url(#bdisk)"/>
<path d="M560 700A128 128 0 0 1 690 578A150 150 0 0 0 560 700Z" fill="#9c9c9c" opacity="0.55"/>
<path d="M563 780A139 139 0 0 0 807 780A170 170 0 0 1 563 780Z" fill="#ababab"/>
</g>
<circle cx="670" cy="694.500" r="70" fill="url(#ctr)" filter="url(#b05)"/>
<circle cx="674" cy="689" r="5" fill="#fff" stroke="#c8c8c8" stroke-width="1.5" filter="url(#b05)"/>
</g>
<g fill="none">
<circle cx="684" cy="678" r="385" stroke="#3cb043" stroke-width="1.3"/>
<circle cx="684" cy="678" r="105.7" stroke="#3cb043" stroke-width="1.3"/>
<circle cx="652" cy="712" r="291.5" stroke="#2a8cf0" stroke-width="1.8"/>
<circle cx="653" cy="712.5" r="289.5" stroke="#ee5a5a" stroke-width="1.5"/>
<path d="M647 712H657M652 707V717" stroke="#f2e030" stroke-width="1.3"/>
<rect x="759.500" y="470.500" width="14" height="14" rx="1" stroke="#ee4848" stroke-width="1.4"/>
</g>
<rect x="761" y="472" width="11" height="11" fill="#333" filter="url(#b05)"/>
<text x="759" y="468" font-size="8" fill="#ee5555" font-family="Liberation Sans, Noto Sans CJK SC, sans-serif">黑点-0.85-47</text>
</svg></div>
</div>

<div id="right">
<div class="abs" style="left:11px;top:22px;width:80px;height:67px;background:#dcdcdc"><svg width="80" height="67" viewBox="0 0 80 67" style="position:absolute;left:0;top:0" font-family="Liberation Sans, sans-serif">
<text x="0" y="0" font-size="50" font-weight="bold" fill="#2b2b2b" transform="translate(14.500 34.500) rotate(43) scale(0.780 1)" text-anchor="middle">A</text>
<path d="M23 20.500H33M28 15.500V25.500" stroke="#a4c93c" stroke-width="2.800"/>
<path d="M40 15L50 21" stroke="#4a4a4a" stroke-width="3.200"/><path d="M46.500 14.500L56 26.500L44 24Z" fill="#4a4a4a"/>
<rect x="41.500" y="26.500" width="34" height="35" fill="none" stroke="#e02828" stroke-width="1.200"/>
<text x="58.500" y="60" font-size="45" fill="#fff" stroke="#222" stroke-width="0.900" text-anchor="middle">A</text>
</svg></div>
<div class="t" style="left:103px;top:16px;font-size:25.5px">AI目标检测</div>
<div class="t" style="left:103px;top:47px;font-size:20px">V1.6</div>
<div class="t" style="left:103px;top:78px;font-size:19.7px">模板ID : 1</div>
<div class="t" style="right:6px;top:82px;font-size:19.5px">30.1ms</div>
<div class="abs" style="left:6px;top:100px;width:544px;height:6px;background:#fff"></div>
<div class="grp" style="left:15px;top:133px;width:526px;height:180px"></div>
<div class="leg" style="left:24px;top:124px">总产能</div>
<div class="lab" style="left:16px;width:131px;top:158.5px">产品总数:</div><div class="val" style="left:164px;top:158.5px">51</div>
<div class="lab" style="left:16px;width:131px;top:189.5px">每分钟产能:</div><div class="val" style="left:164px;top:189.5px">46.5</div>
<div class="lab" style="left:16px;width:131px;top:220.5px">最小检测时间:</div><div class="val" style="left:164px;top:220.5px">45</div>
<div class="lab" style="left:16px;width:131px;top:251.5px">平均检测时间:</div><div class="val" style="left:164px;top:251.5px">59</div>
<div class="lab" style="left:230px;width:183px;top:158.5px">NG数量:</div><div class="val" style="left:430px;top:158.5px">33</div>
<div class="lab" style="left:230px;width:183px;top:189.5px">节拍时间:</div><div class="val" style="left:430px;top:189.5px">1290</div>
<div class="lab" style="left:230px;width:183px;top:220.5px">最大检测时间:</div><div class="val" style="left:430px;top:220.5px">84</div>
<div class="lab" style="left:230px;width:183px;top:251.5px">理论每分钟产能:</div><div class="val" style="left:430px;top:251.5px">1000.7</div>
<div class="lab" style="left:130px;width:169px;top:282.5px">当前结果:</div><div class="val" style="left:314px;top:282.5px">NG</div>
<div class="grp" style="left:15px;top:333px;width:526px;height:92px"></div>
<div class="leg" style="left:24px;top:324px">超数报警</div>
<div class="val" style="left:25px;top:358px">总数:</div>
<div class="val" style="left:97px;top:358px">221</div>
<div class="val" style="left:168px;top:358px">OK:</div>
<div class="val" style="left:240px;top:358px">68</div>
<div class="val" style="left:312px;top:358px">NG:</div>
<div class="val" style="left:384px;top:358px">153</div>
<div class="val" style="left:455px;top:358px">重置计数</div>
<div class="chk" style="left:25px;top:395px"></div><div class="val" style="left:43px;top:390.5px">OK:</div>
<div class="spin" style="left:98px;top:387px">10000<u class="up"></u><u class="dn"></u></div>
<div class="chk" style="left:196px;top:395px"></div><div class="val" style="left:214px;top:390.5px">NG:</div>
<div class="spin" style="left:268px;top:387px">10000<u class="up"></u><u class="dn"></u></div>
<div class="chk" style="left:366px;top:395px"></div><div class="val" style="left:384px;top:390.5px">总数:</div>
<div class="spin" style="left:439px;top:387px">1<u class="up"></u><u class="dn"></u></div>
<div class="grp" style="left:15px;top:444px;width:526px;height:476px"></div>
<div class="leg" style="left:24px;top:435px">相机产能</div>
<div class="abs" id="tblwrap" style="left:25px;top:467px;width:506px;height:413px;border:1px solid #8a8a8a;border-right:0;border-bottom:0;overflow:hidden">
<div class="abs" style="left:0;top:0;width:487px;height:394px;overflow:hidden;background:#646464;font-size:17.5px">
<div class="abs" style="left:0;top:0;width:129px;height:37px;background:#595959;border-right:2px solid #1e1e1e;border-bottom:2px solid #1e1e1e"></div>
<div class="abs" style="left:129px;top:0;width:100px;height:37px;background:#595959;border-right:2px solid #1e1e1e;border-bottom:2px solid #1e1e1e;text-align:center;line-height:36px;font-size:18.5px">1</div>
<div class="abs" style="left:229px;top:0;width:100px;height:37px;background:#595959;border-right:2px solid #1e1e1e;border-bottom:2px solid #1e1e1e;text-align:center;line-height:36px;font-size:18.5px">2</div>
<div class="abs" style="left:329px;top:0;width:100px;height:37px;background:#595959;border-right:2px solid #1e1e1e;border-bottom:2px solid #1e1e1e;text-align:center;line-height:36px;font-size:18.5px">3</div>
<div class="abs" style="left:429px;top:0;width:100px;height:37px;background:#595959;border-right:2px solid #1e1e1e;border-bottom:2px solid #1e1e1e;text-align:center;line-height:36px;font-size:18.5px">4</div>
<div class="abs" style="left:0;top:37px;width:129px;height:33px;background:#595959;border-right:2px solid #1e1e1e;border-bottom:2px solid #1e1e1e;font-size:19px;line-height:34px;padding-left:1px;white-space:nowrap">检测数量</div>
<div class="abs" style="left:129px;top:37px;width:100px;height:33px;background:#646464;border-right:1px solid #595959;border-bottom:1px solid #595959;text-align:center;line-height:32px">54</div>
<div class="abs" style="left:229px;top:37px;width:100px;height:33px;background:#646464;border-right:1px solid #595959;border-bottom:1px solid #595959;text-align:center;line-height:32px">53</div>
<div class="abs" style="left:329px;top:37px;width:100px;height:33px;background:#646464;border-right:1px solid #595959;border-bottom:1px solid #595959;text-align:center;line-height:32px">52</div>
<div class="abs" style="left:429px;top:37px;width:100px;height:33px;background:#646464;border-right:1px solid #595959;border-bottom:1px solid #595959;text-align:center;line-height:32px">52</div>
<div class="abs" style="left:0;top:70px;width:129px;height:33px;background:#595959;border-right:2px solid #1e1e1e;border-bottom:2px solid #1e1e1e;font-size:19px;line-height:34px;padding-left:1px;white-space:nowrap">当前结果</div>
<div class="abs" style="left:129px;top:70px;width:100px;height:33px;background:#797979;border-right:1px solid #6b6b6b;border-bottom:1px solid #6b6b6b;text-align:center;line-height:32px">OK</div>
<div class="abs" style="left:229px;top:70px;width:100px;height:33px;background:#797979;border-right:1px solid #6b6b6b;border-bottom:1px solid #6b6b6b;text-align:center;line-height:32px">OK</div>
<div class="abs" style="left:329px;top:70px;width:100px;height:33px;background:#797979;border-right:1px solid #6b6b6b;border-bottom:1px solid #6b6b6b;text-align:center;line-height:32px">OK</div>
<div class="abs" style="left:429px;top:70px;width:100px;height:33px;background:#797979;border-right:1px solid #6b6b6b;border-bottom:1px solid #6b6b6b;text-align:center;line-height:32px">OK</div>
<div class="abs" style="left:0;top:103px;width:129px;height:33px;background:#595959;border-right:2px solid #1e1e1e;border-bottom:2px solid #1e1e1e;font-size:19px;line-height:34px;padding-left:1px;white-space:nowrap">NG数量</div>
<div class="abs" style="left:129px;top:103px;width:100px;height:33px;background:#646464;border-right:1px solid #595959;border-bottom:1px solid #595959;text-align:center;line-height:32px">6</div>
<div class="abs" style="left:229px;top:103px;width:100px;height:33px;background:#646464;border-right:1px solid #595959;border-bottom:1px solid #595959;text-align:center;line-height:32px">4</div>
<div class="abs" style="left:329px;top:103px;width:100px;height:33px;background:#646464;border-right:1px solid #595959;border-bottom:1px solid #595959;text-align:center;line-height:32px">17</div>
<div class="abs" style="left:429px;top:103px;width:100px;height:33px;background:#646464;border-right:1px solid #595959;border-bottom:1px solid #595959;text-align:center;line-height:32px">4</div>
<div class="abs" style="left:0;top:136px;width:129px;height:33px;background:#595959;border-right:2px solid #1e1e1e;border-bottom:2px solid #1e1e1e;font-size:19px;line-height:34px;padding-left:1px;white-space:nowrap">检测时间</div>
<div class="abs" style="left:129px;top:136px;width:100px;height:33px;background:#797979;border-right:1px solid #6b6b6b;border-bottom:1px solid #6b6b6b;text-align:center;line-height:32px">36</div>
<div class="abs" style="left:229px;top:136px;width:100px;height:33px;background:#797979;border-right:1px solid #6b6b6b;border-bottom:1px solid #6b6b6b;text-align:center;line-height:32px">40</div>
<div class="abs" style="left:329px;top:136px;width:100px;height:33px;background:#797979;border-right:1px solid #6b6b6b;border-bottom:1px solid #6b6b6b;text-align:center;line-height:32px">59</div>
<div class="abs" style="left:429px;top:136px;width:100px;height:33px;background:#797979;border-right:1px solid #6b6b6b;border-bottom:1px solid #6b6b6b;text-align:center;line-height:32px">76</div>
<div class="abs" style="left:0;top:169px;width:129px;height:33px;background:#595959;border-right:2px solid #1e1e1e;border-bottom:2px solid #1e1e1e;font-size:19px;line-height:34px;padding-left:1px;white-space:nowrap">检测频率</div>
<div class="abs" style="left:129px;top:169px;width:100px;height:33px;background:#646464;border-right:1px solid #595959;border-bottom:1px solid #595959;text-align:center;line-height:32px">0.8</div>
<div class="abs" style="left:229px;top:169px;width:100px;height:33px;background:#646464;border-right:1px solid #595959;border-bottom:1px solid #595959;text-align:center;line-height:32px">0.8</div>
<div class="abs" style="left:329px;top:169px;width:100px;height:33px;background:#646464;border-right:1px solid #595959;border-bottom:1px solid #595959;text-align:center;line-height:32px">0.8</div>
<div class="abs" style="left:429px;top:169px;width:100px;height:33px;background:#646464;border-right:1px solid #595959;border-bottom:1px solid #595959;text-align:center;line-height:32px">0.8</div>
<div class="abs" style="left:0;top:202px;width:129px;height:33px;background:#595959;border-right:2px solid #1e1e1e;border-bottom:2px solid #1e1e1e;font-size:19px;line-height:34px;padding-left:1px;white-space:nowrap">拍照频率</div>
<div class="abs" style="left:129px;top:202px;width:100px;height:33px;background:#797979;border-right:1px solid #6b6b6b;border-bottom:1px solid #6b6b6b;text-align:center;line-height:32px">0.8</div>
<div class="abs" style="left:229px;top:202px;width:100px;height:33px;background:#797979;border-right:1px solid #6b6b6b;border-bottom:1px solid #6b6b6b;text-align:center;line-height:32px">0.8</div>
<div class="abs" style="left:329px;top:202px;width:100px;height:33px;background:#797979;border-right:1px solid #6b6b6b;border-bottom:1px solid #6b6b6b;text-align:center;line-height:32px">0.8</div>
<div class="abs" style="left:429px;top:202px;width:100px;height:33px;background:#797979;border-right:1px solid #6b6b6b;border-bottom:1px solid #6b6b6b;text-align:center;line-height:32px">0.8</div>
<div class="abs" style="left:0;top:235px;width:129px;height:33px;background:#595959;border-right:2px solid #1e1e1e;border-bottom:2px solid #1e1e1e;font-size:19px;line-height:34px;padding-left:1px;white-space:nowrap">检测速率</div>
<div class="abs" style="left:129px;top:235px;width:100px;height:33px;background:#646464;border-right:1px solid #595959;border-bottom:1px solid #595959;text-align:center;line-height:32px">26.7</div>
<div class="abs" style="left:229px;top:235px;width:100px;height:33px;background:#646464;border-right:1px solid #595959;border-bottom:1px solid #595959;text-align:center;line-height:32px">26.2</div>
<div class="abs" style="left:329px;top:235px;width:100px;height:33px;background:#646464;border-right:1px solid #595959;border-bottom:1px solid #595959;text-align:center;line-height:32px">18.9</div>
<div class="abs" style="left:429px;top:235px;width:100px;height:33px;background:#646464;border-right:1px solid #595959;border-bottom:1px solid #595959;text-align:center;line-height:32px">17.9</div>
<div class="abs" style="left:0;top:268px;width:129px;height:33px;background:#595959;border-right:2px solid #1e1e1e;border-bottom:2px solid #1e1e1e;font-size:19px;line-height:34px;padding-left:1px;white-space:nowrap">最小检测时间</div>
<div class="abs" style="left:129px;top:268px;width:100px;height:33px;background:#797979;border-right:1px solid #6b6b6b;border-bottom:1px solid #6b6b6b;text-align:center;line-height:32px">30</div>
<div class="abs" style="left:229px;top:268px;width:100px;height:33px;background:#797979;border-right:1px solid #6b6b6b;border-bottom:1px solid #6b6b6b;text-align:center;line-height:32px">32</div>
<div class="abs" style="left:329px;top:268px;width:100px;height:33px;background:#797979;border-right:1px solid #6b6b6b;border-bottom:1px solid #6b6b6b;text-align:center;line-height:32px">37</div>
<div class="abs" style="left:429px;top:268px;width:100px;height:33px;background:#797979;border-right:1px solid #6b6b6b;border-bottom:1px solid #6b6b6b;text-align:center;line-height:32px">42</div>
<div class="abs" style="left:0;top:301px;width:129px;height:33px;background:#595959;border-right:2px solid #1e1e1e;border-bottom:2px solid #1e1e1e;font-size:19px;line-height:34px;padding-left:1px;white-space:nowrap">最大检测时间</div>
<div class="abs" style="left:129px;top:301px;width:100px;height:33px;background:#646464;border-right:1px solid #595959;border-bottom:1px solid #595959;text-align:center;line-height:32px">72</div>
<div class="abs" style="left:229px;top:301px;width:100px;height:33px;background:#646464;border-right:1px solid #595959;border-bottom:1px solid #595959;text-align:center;line-height:32px">55</div>
<div class="abs" style="left:329px;top:301px;width:100px;height:33px;background:#646464;border-right:1px solid #595959;border-bottom:1px solid #595959;text-align:center;line-height:32px">79</div>
<div class="abs" style="left:429px;top:301px;width:100px;height:33px;background:#646464;border-right:1px solid #595959;border-bottom:1px solid #595959;text-align:center;line-height:32px">76</div>
<div class="abs" style="left:0;top:334px;width:129px;height:33px;background:#595959;border-right:2px solid #1e1e1e;border-bottom:2px solid #1e1e1e;font-size:19px;line-height:34px;padding-left:1px;white-space:nowrap">平均检测时间</div>
<div class="abs" style="left:129px;top:334px;width:100px;height:33px;background:#797979;border-right:1px solid #6b6b6b;border-bottom:1px solid #6b6b6b;text-align:center;line-height:32px">37</div>
<div class="abs" style="left:229px;top:334px;width:100px;height:33px;background:#797979;border-right:1px solid #6b6b6b;border-bottom:1px solid #6b6b6b;text-align:center;line-height:32px">38</div>
<div class="abs" style="left:329px;top:334px;width:100px;height:33px;background:#797979;border-right:1px solid #6b6b6b;border-bottom:1px solid #6b6b6b;text-align:center;line-height:32px">52</div>
<div class="abs" style="left:429px;top:334px;width:100px;height:33px;background:#797979;border-right:1px solid #6b6b6b;border-bottom:1px solid #6b6b6b;text-align:center;line-height:32px">55</div>
<div class="abs" style="left:0;top:367px;width:129px;height:33px;background:#595959;border-right:2px solid #1e1e1e;border-bottom:2px solid #1e1e1e;font-size:19px;line-height:34px;padding-left:1px;white-space:nowrap">99%检测时间</div>
<div class="abs" style="left:129px;top:367px;width:100px;height:33px;background:#646464;border-right:1px solid #595959;border-bottom:1px solid #595959;text-align:center;line-height:32px">0</div>
<div class="abs" style="left:229px;top:367px;width:100px;height:33px;background:#646464;border-right:1px solid #595959;border-bottom:1px solid #595959;text-align:center;line-height:32px">0</div>
<div class="abs" style="left:329px;top:367px;width:100px;height:33px;background:#646464;border-right:1px solid #595959;border-bottom:1px solid #595959;text-align:center;line-height:32px">0</div>
<div class="abs" style="left:429px;top:367px;width:100px;height:33px;background:#646464;border-right:1px solid #595959;border-bottom:1px solid #595959;text-align:center;line-height:32px">0</div>
</div>
<div class="abs" style="left:487px;top:0;width:17px;height:394px;background:#f0f0f0"><div class="abs" style="left:0;top:17px;width:17px;height:326px;background:#cdcdcd"></div><svg class="abs" style="left:0;top:0" width="17" height="394" fill="none" stroke="#404040" stroke-width="1.8"><path d="M4.500 11L8.500 7L12.500 11M4.500 383L8.500 387L12.500 383"/></svg></div>
<div class="abs" style="left:0;top:394px;width:487px;height:17px;background:#f0f0f0"><div class="abs" style="left:17px;top:0;width:226px;height:17px;background:#cdcdcd"></div><svg class="abs" style="left:0;top:0" width="487" height="17" fill="none" stroke="#404040" stroke-width="1.8"><path d="M11 4.500L7 8.500L11 12.500M476 4.500L480 8.500L476 12.500"/></svg></div>
<div class="abs" style="left:487px;top:394px;width:17px;height:17px;background:#5c5c5c"></div>
</div>
<div class="t" style="left:15px;width:526px;text-align:center;top:890px;font-size:19.2px">切换至简略信息</div>
<div class="abs" style="left:6px;top:936px;width:544px;height:2px;background:#d0d0d0"></div>
<div class="abs" style="left:435px;top:944px;width:110px;height:60px;background:#00bcd4"><svg width="110" height="60" viewBox="0 0 110 60" style="position:absolute;left:0;top:0">
<rect x="26" y="4.700" width="58" height="39.500" rx="1.800" fill="#fff"/>
<path d="M30 9.200H80V28.500L71.200 21L62.100 29L49.200 16L40.400 24.400L36.200 21L30 26Z" fill="#00bcd4"/>
<circle cx="62" cy="16.500" r="3.300" fill="#fff"/>
<circle cx="55" cy="44" r="13.200" fill="#00bcd4"/><circle cx="55" cy="44" r="10.600" fill="#fff"/>
<path d="M48 44H62M55 37V51" stroke="#00bcd4" stroke-width="2.300"/>
</svg></div>
</div>
<div class="abs" style="left:56.500px;top:2px;width:57px;height:57px;border-radius:50%;background:#0000ff;mix-blend-mode:difference"></div>
<svg class="abs" style="left:84px;top:30px" width="14" height="21" viewBox="0 0 14 21"><path d="M1 1V17.200L4.900 13.600L7.700 20L10 19L7.200 12.800H12.500Z" fill="#fff" stroke="#000" stroke-width="1"/></svg>
</body>
</html>
